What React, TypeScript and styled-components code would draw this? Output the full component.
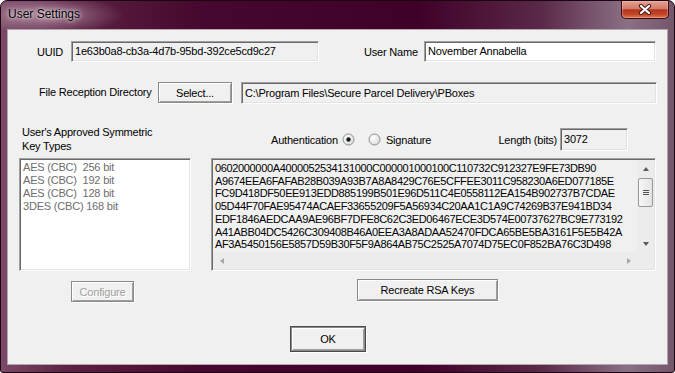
import React from 'react';
import styled, { createGlobalStyle } from 'styled-components';

const GlobalStyle = createGlobalStyle`
  html, body {
    margin: 0;
    padding: 0;
    background: #ffffff;
  }
  body {
    font-family: "Liberation Sans", Arial, sans-serif;
  }
`;

const Window = styled.div`
  width: 675px;
  height: 373px;
  box-sizing: border-box;
  display: flex;
  flex-direction: column;
  border: 1px solid #1c0412;
  border-radius: 7px 7px 3px 3px;
  overflow: hidden;
  background:
    radial-gradient(ellipse 75px 20px at 48px 14px, rgba(255, 235, 245, 0.45), rgba(255, 235, 245, 0) 100%),
    linear-gradient(90deg, #7b4a66 0%, #5b2142 10%, #46082e 30%, #3f0128 62%, #5a2848 80%, #8a7084 93%, #74566b 100%);
`;

const TitleBar = styled.div`
  height: 28px;
  display: flex;
  justify-content: space-between;
  align-items: flex-start;
  padding: 0 5px 0 7px;
`;

const TitleText = styled.div`
  font-size: 12px;
  line-height: 27px;
  color: #000;
  text-shadow: 0 0 6px rgba(255, 255, 255, 0.9), 0 0 3px rgba(255, 255, 255, 0.7);
`;

const CloseButton = styled.div`
  width: 48px;
  height: 18px;
  box-sizing: border-box;
  border: 1px solid #3a0c10;
  border-top: none;
  border-radius: 0 0 5px 5px;
  background: linear-gradient(#e3a295 0%, #d47a68 45%, #b3331d 52%, #c24628 78%, #de7a52 100%);
  box-shadow: inset 0 0 0 1px rgba(255, 210, 200, 0.35);
  display: flex;
  align-items: center;
  justify-content: center;
`;

const Client = styled.div`
  flex: 1;
  margin: 0 6px 7px;
  box-sizing: border-box;
  background: #f0f0f0;
  border: 1px solid #b3a6ad;
  padding-top: 11px;
  display: flex;
  flex-direction: column;
  font-size: 11px;
  letter-spacing: -0.2px;
  color: #000;
`;

const Row = styled.div<{ $mt?: number; $align?: string }>`
  display: flex;
  align-items: ${p => p.$align || 'center'};
  margin-top: ${p => p.$mt || 0}px;
`;

const Label = styled.div<{ $ml?: number; $w?: number; $lh?: number }>`
  margin-left: ${p => p.$ml || 0}px;
  width: ${p => (p.$w ? `${p.$w}px` : 'auto')};
  line-height: ${p => (p.$lh ? `${p.$lh}px` : 'normal')};
  white-space: nowrap;
`;

const Field = styled.div<{ $w: number; $h: number; $ml?: number; $white?: boolean }>`
  box-sizing: border-box;
  width: ${p => p.$w}px;
  height: ${p => p.$h}px;
  margin-left: ${p => p.$ml || 0}px;
  background: ${p => (p.$white ? '#ffffff' : '#f0f0f0')};
  border: 1px solid;
  border-color: #a0a0a0 #ffffff #ffffff #a0a0a0;
  box-shadow: inset 1px 1px 0 #696969, inset -1px -1px 0 #e3e3e3;
  padding: 0 3px;
  line-height: ${p => p.$h - 2}px;
  white-space: nowrap;
  overflow: hidden;
`;

const Button = styled.div<{ $w: number; $h: number; $ml?: number; $mt?: number; $disabled?: boolean; $default?: boolean }>`
  box-sizing: border-box;
  width: ${p => p.$w}px;
  height: ${p => p.$h}px;
  margin-left: ${p => p.$ml || 0}px;
  margin-top: ${p => p.$mt || 0}px;
  display: flex;
  align-items: center;
  justify-content: center;
  background: #f0f0f0;
  border: 1px solid ${p => (p.$default ? '#4a4a4a' : '#8a8a8a')};
  box-shadow: ${p =>
    p.$default
      ? 'inset 0 0 0 1px #8a8a8a, inset 2px 2px 0 #ffffff, inset -2px -2px 0 #a0a0a0, 1px 1px 0 #ffffff'
      : 'inset 1px 1px 0 #ffffff, inset -1px -1px 0 #a0a0a0, 1px 1px 0 #ffffff'};
  color: ${p => (p.$disabled ? '#a0a0a0' : '#000')};
  text-shadow: ${p => (p.$disabled ? '1px 1px 0 #ffffff' : 'none')};
  white-space: nowrap;
`;

const Main = styled.div`
  display: grid;
  grid-template-columns: 172px 445px;
  column-gap: 20px;
  align-items: start;
  margin-top: 21px;
  padding-left: 11px;
`;

const Column = styled.div`
  display: flex;
  flex-direction: column;
`;

const KeyTypesLabel = styled.div`
  margin-left: 3px;
  line-height: 14px;
  height: 28px;
`;

const ListBox = styled.div`
  box-sizing: border-box;
  margin-top: 5px;
  width: 172px;
  height: 113px;
  background: #ffffff;
  border: 1px solid;
  border-color: #a0a0a0 #ffffff #ffffff #a0a0a0;
  box-shadow: inset 1px 1px 0 #696969, inset -1px -1px 0 #e3e3e3;
  padding: 2px 3px;
`;

const ListItem = styled.div`
  line-height: 13px;
  color: #6d6d6d;
  white-space: pre;
`;

const AuthRow = styled.div`
  margin-top: 3px;
  height: 23px;
  display: flex;
  align-items: center;
`;

const RadioWrap = styled.div<{ $ml: number }>`
  margin-left: ${p => p.$ml}px;
  width: 13px;
  height: 13px;
  display: flex;
`;

const HexBox = styled.div`
  box-sizing: border-box;
  margin-top: 7px;
  width: 445px;
  height: 113px;
  background: #f0f0f0;
  border: 1px solid;
  border-color: #a0a0a0 #ffffff #ffffff #a0a0a0;
  box-shadow: inset 1px 1px 0 #696969, inset -1px -1px 0 #e3e3e3;
  padding: 1px;
  display: grid;
  grid-template-columns: 1fr 17px;
  grid-template-rows: 1fr 17px;
`;

const HexText = styled.div`
  padding: 2px 0 0 2px;
  overflow: hidden;
  white-space: pre;
  line-height: 12.7px;
  letter-spacing: -0.35px;
`;

const VScroll = styled.div`
  display: flex;
  flex-direction: column;
  align-items: center;
  background: #ececec;
`;

const ArrowCell = styled.div`
  width: 17px;
  height: 17px;
  display: flex;
  align-items: center;
  justify-content: center;
`;

const Thumb = styled.div`
  box-sizing: border-box;
  margin-top: 1px;
  width: 15px;
  height: 29px;
  border: 1px solid #979797;
  border-radius: 2px;
  background: linear-gradient(90deg, #f6f6f6, #e4e4e4);
  display: flex;
  flex-direction: column;
  align-items: center;
  justify-content: center;
  gap: 1px;
`;

const Grip = styled.div`
  width: 6px;
  height: 1px;
  background: #555;
`;

const Track = styled.div`
  flex: 1;
`;

const HScroll = styled.div`
  display: flex;
  justify-content: space-between;
  background: #ececec;
`;

const Corner = styled.div`
  background: #ececec;
`;

const Tri = styled.div<{ $dir: 'up' | 'down' | 'left' | 'right'; $color: string }>`
  width: 0;
  height: 0;
  ${p =>
    p.$dir === 'up'
      ? `border-left: 3.5px solid transparent; border-right: 3.5px solid transparent; border-bottom: 4px solid ${p.$color};`
      : p.$dir === 'down'
      ? `border-left: 3.5px solid transparent; border-right: 3.5px solid transparent; border-top: 4px solid ${p.$color};`
      : p.$dir === 'left'
      ? `border-top: 3.5px solid transparent; border-bottom: 3.5px solid transparent; border-right: 4px solid ${p.$color};`
      : `border-top: 3.5px solid transparent; border-bottom: 3.5px solid transparent; border-left: 4px solid ${p.$color};`}
`;

const hexLines = [
  '0602000000A4000052534131000C000001000100C110732C912327E9FE73DB90',
  'A9674EEA6FAFAB28B039A93B7A8A8429C76E5CFFEE3011C958230A6ED077185E',
  'FC9D418DF50EE913EDD885199B501E96D511C4E0558112EA154B902737B7CDAE',
  '05D44F70FAE95474ACAEF33655209F5A56934C20AA1C1A9C74269B37E941BD34',
  'EDF1846AEDCAA9AE96BF7DFE8C62C3ED06467ECE3D574E00737627BC9E773192',
  'A41ABB04DC5426C309408B46A0EEA3A8ADAA52470FDCA65BE5BA3161F5E5B42A',
  'AF3A5450156E5857D59B30F5F9A864AB75C2525A7074D75EC0F852BA76C3D498',
];

const keyTypes = ['AES (CBC)  256 bit', 'AES (CBC)  192 bit', 'AES (CBC)  128 bit', '3DES (CBC) 168 bit'];

const Radio = ({ checked, id }: { checked?: boolean; id: string }) => (
  <svg width="13" height="13" viewBox="0 0 13 13">
    <defs>
      <radialGradient id={id} cx="0.4" cy="0.35" r="0.7">
        <stop offset="0" stopColor="#ffffff" />
        <stop offset="1" stopColor="#d8d8d8" />
      </radialGradient>
    </defs>
    <circle cx="6.5" cy="6.5" r="5.5" fill={`url(#${id})`} stroke="#8e8f8f" />
    {checked && <circle cx="6.5" cy="6.5" r="2.2" fill="#1b1b1b" />}
  </svg>
);

const CloseGlyph = () => (
  <svg width="14" height="11" viewBox="0 0 14 11">
    <path d="M3 2 L11 9 M11 2 L3 9" stroke="#4a1a1a" strokeWidth="4.2" strokeLinecap="round" />
    <path d="M3 2 L11 9 M11 2 L3 9" stroke="#ffffff" strokeWidth="2.2" strokeLinecap="round" />
  </svg>
);

export default function App() {
  return (
    <>
      <GlobalStyle />
      <Window>
        <TitleBar>
          <TitleText>User Settings</TitleText>
          <CloseButton>
            <CloseGlyph />
          </CloseButton>
        </TitleBar>

        <Client>
          <Row>
            <Label $ml={29} $w={27}>UUID</Label>
            <Field $w={248} $h={21} $ml={7}>1e63b0a8-cb3a-4d7b-95bd-392ce5cd9c27</Field>
            <Label $ml={45} $w={54}>User Name</Label>
            <Field $w={232} $h={21} $ml={6} $white>November Annabella</Field>
          </Row>

          <Row $mt={20} $align="flex-start">
            <Label $ml={31} $w={112} $lh={21}>File Reception Directory</Label>
            <Button $w={74} $h={21} $ml={7}>Select...</Button>
            <Field $w={416} $h={22} $ml={9}>C:\Program Files\Secure Parcel Delivery\PBoxes</Field>
          </Row>

          <Main>
            <Column>
              <KeyTypesLabel>
                User's Approved Symmetric
                <br />
                Key Types
              </KeyTypesLabel>
              <ListBox>
                {keyTypes.map(k => (
                  <ListItem key={k}>{k}</ListItem>
                ))}
              </ListBox>
              <Button $w={63} $h={21} $ml={52} $mt={10} $disabled>Configure</Button>
            </Column>

            <Column>
              <AuthRow>
                <Label $ml={60}>Authentication</Label>
                <RadioWrap $ml={4}>
                  <Radio checked id="rg1" />
                </RadioWrap>
                <RadioWrap $ml={13}>
                  <Radio id="rg2" />
                </RadioWrap>
                <Label $ml={5}>Signature</Label>
                <Label style={{ marginLeft: 'auto' }}>Length (bits)</Label>
                <Field $w={68} $h={23} $ml={3} style={{ marginRight: 28 }}>3072</Field>
              </AuthRow>

              <HexBox>
                <HexText>{hexLines.join('\n')}</HexText>
                <VScroll>
                  <ArrowCell>
                    <Tri $dir="up" $color="#5a5a5a" />
                  </ArrowCell>
                  <Thumb>
                    <Grip />
                    <Grip />
                    <Grip />
                  </Thumb>
                  <Track />
                  <ArrowCell>
                    <Tri $dir="down" $color="#5a5a5a" />
                  </ArrowCell>
                </VScroll>
                <HScroll>
                  <ArrowCell>
                    <Tri $dir="left" $color="#a8a8a8" />
                  </ArrowCell>
                  <ArrowCell>
                    <Tri $dir="right" $color="#a8a8a8" />
                  </ArrowCell>
                </HScroll>
                <Corner />
              </HexBox>

              <Button $w={141} $h={22} $ml={146} $mt={8}>Recreate RSA Keys</Button>
            </Column>
          </Main>

          <Row $mt={24}>
            <Button $w={76} $h={26} $ml={282} $default>OK</Button>
          </Row>
        </Client>
      </Window>
    </>
  );
}
